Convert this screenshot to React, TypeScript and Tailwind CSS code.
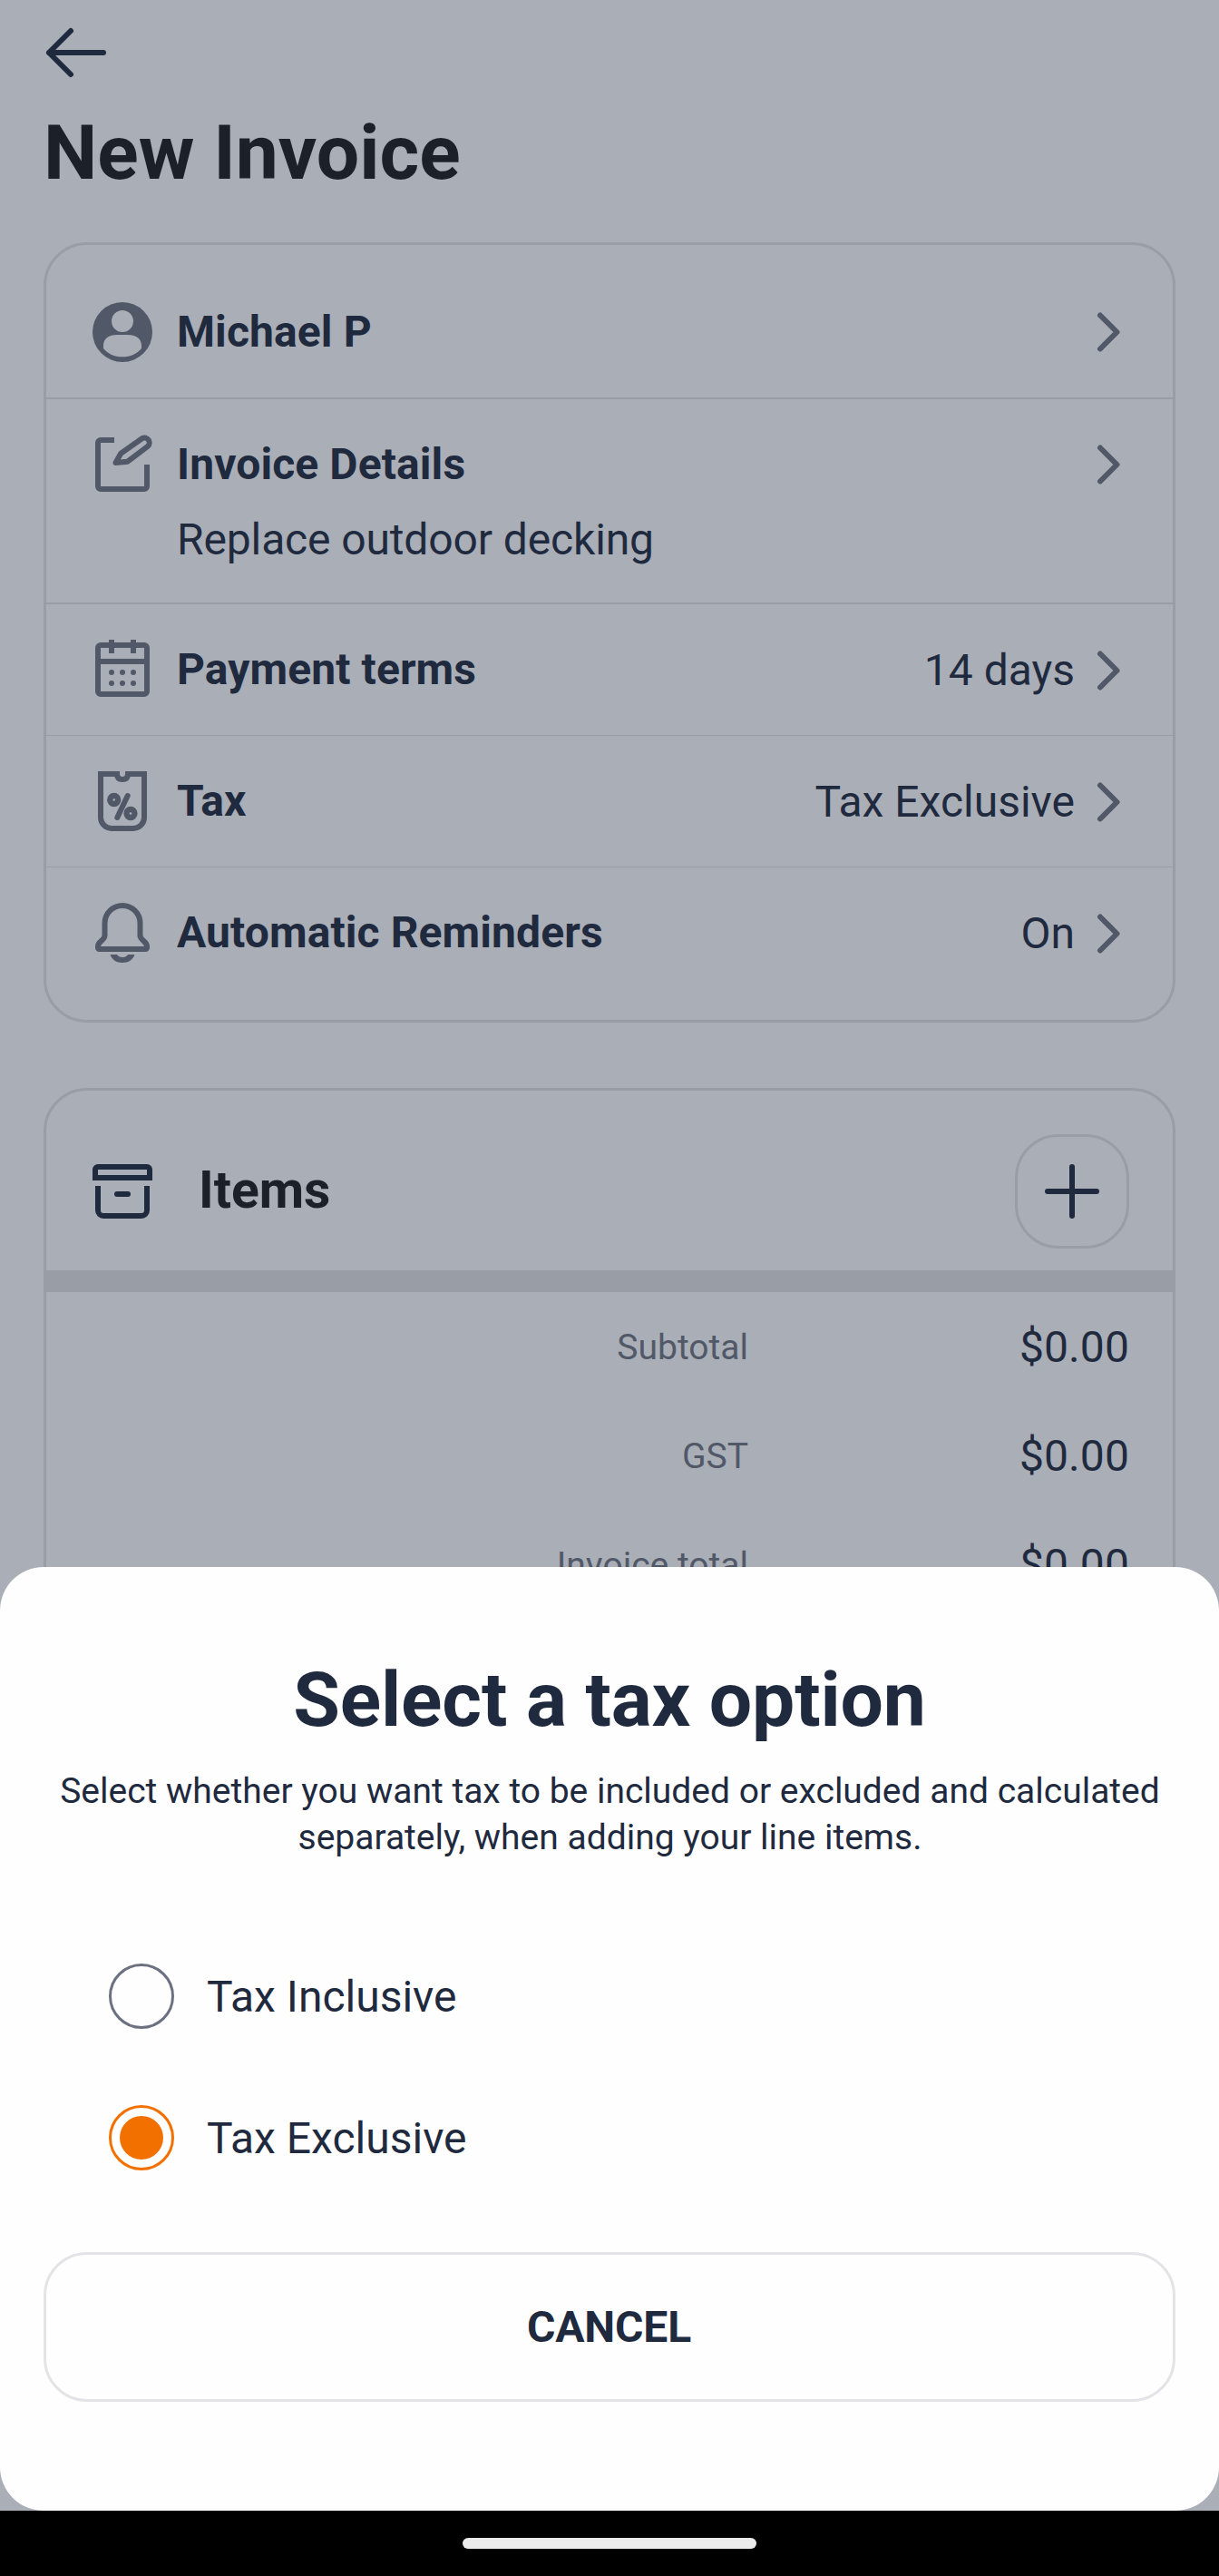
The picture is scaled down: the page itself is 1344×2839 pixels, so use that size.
import type { ReactNode } from "react";

function Icon({ children, className = "" }: { children: ReactNode; className?: string }) {
  return (
    <svg viewBox="0 0 24 24" fill="none" stroke="currentColor" strokeWidth="2" className={`size-[72px] shrink-0 ${className}`}>
      {children}
    </svg>
  );
}

const AvatarIcon = () => (
  <Icon>
    <path
      fill="currentColor"
      stroke="none"
      fillRule="evenodd"
      d="M12 1a11 11 0 1 1 0 22 11 11 0 0 1 0-22ZM12 4a4 4 0 1 0 0 8 4 4 0 0 0 0-8ZM10 13c-3 0-5 1.300-5 4v1c1.600 2 4.100 3.100 7 3.100s5.400-1.100 7-3.100v-1c0-2.700-2-4-5-4Z"
    />
  </Icon>
);

const EditIcon = () => (
  <Icon>
    <path d="M9 3H4a1 1 0 0 0-1 1v16a1 1 0 0 0 1 1h16a1 1 0 0 0 1-1v-8" />
    <path strokeLinejoin="round" d="M9.500 11.300 11.400 7.900 19.200 2.400a1.800 1.800 0 0 1 2.100 2.900L13.900 10.900Z" />
  </Icon>
);

const CalendarIcon = () => (
  <Icon>
    <rect x="3" y="3" width="18" height="18" rx="1" />
    <path d="M3 9h18M8 1v5M16 1v5" />
    <g fill="currentColor" stroke="none">
      {[8, 12, 16].map((x) => [13, 17].map((y) => <circle key={`${x}-${y}`} cx={x} cy={y} r="1" />))}
    </g>
  </Icon>
);

const TaxIcon = () => (
  <Icon>
    <path d="M4 2h6c0 1.300.700 2 2 2s2-.700 2-2h6v16a4 4 0 0 1-4 4H8a4 4 0 0 1-4-4Z" />
    <circle cx="8.900" cy="11.500" r="1.500" strokeWidth="2.100" />
    <circle cx="15" cy="16.500" r="1.500" strokeWidth="2.100" />
    <path strokeLinecap="round" d="M10.100 18l3.800-8" />
  </Icon>
);

const BellIcon = () => (
  <Icon>
    <path d="M3.500 18h17a.5.5 0 0 0 .5-.5V17c0-2-2.500-2.100-2.500-4V8.500a6.500 6.500 0 0 0-13 0V13c0 1.900-2.500 2-2.500 4v.5a.5.5 0 0 0 .5.5Z" />
    <path fill="currentColor" stroke="none" d="M7.500 20H10c.4.700 1 1 2 1s1.600-.3 2-1h2.500c-.6 1.900-2.300 3-4.500 3s-3.900-1.100-4.500-3Z" />
  </Icon>
);

const ArchiveIcon = () => (
  <Icon className="text-[#1f2a3f]">
    <path d="M2 7V4a1 1 0 0 1 1-1h18a1 1 0 0 1 1 1v3Z" />
    <path d="M3 10v9a2 2 0 0 0 2 2h14a2 2 0 0 0 2-2v-9" />
    <path strokeLinecap="round" d="M10 13h4" />
  </Icon>
);

const Chevron = () => (
  <svg viewBox="0 0 30 48" fill="none" stroke="currentColor" strokeWidth="6" strokeLinecap="round" strokeLinejoin="round" className="h-12 w-[30px] shrink-0">
    <path d="M5 5.500 23.500 24 5 42.500" />
  </svg>
);

type RowProps = { icon: ReactNode; label: string; value?: string; detail?: string; divider?: string };

function Row({ icon, label, value, detail, divider = "" }: RowProps) {
  return (
    <div className={`border-[#999da5] ${divider}`}>
      <div className="flex h-36 items-center pr-[55px] pl-12 text-[#515969]">
        {icon}
        <span className="ml-6 grow text-[48px] leading-[56px] font-bold tracking-[0.1px] text-[#1f2a3f]">{label}</span>
        <div className={`flex items-center gap-[23px] ${value ? "pt-0.5" : ""}`}>
          {value && <span className="text-[48px] leading-[56px] text-[#1f2a3f]">{value}</span>}
          <Chevron />
        </div>
      </div>
      {detail && <p className="-mt-[17px] mb-[41px] ml-36 text-[48px] leading-[56px] tracking-[-0.13px] text-[#1f2a3f]">{detail}</p>}
    </div>
  );
}

function Total({ label }: { label: string }) {
  return (
    <div className="flex h-[120px] items-center pt-0.5 text-[#1f2a3f]">
      <span className="w-[774px] text-right text-[39px] text-[#515969]">{label}</span>
      <span className="grow pr-12 text-right text-[48px] tracking-[0.1px]">$0.00</span>
    </div>
  );
}

function Option({ label, checked = false }: { label: string; checked?: boolean }) {
  return (
    <div className="flex items-center gap-9">
      <span className={`flex size-[72px] items-center justify-center rounded-full border-3 ${checked ? "border-[#f27000]" : "border-[#6b7180]"}`}>
        {checked && <span className="size-12 rounded-full bg-[#f27000]" />}
      </span>
      <span className="pt-0.5 text-[48px] leading-[56px]">{label}</span>
    </div>
  );
}

export default function App() {
  return (
    <div className="flex h-[2839px] w-[1344px] flex-col bg-black font-['Roboto',sans-serif]">
      <main className="relative h-[2767px] overflow-hidden bg-[#aaaeb6] px-12">
        <header>
          <div className="flex h-[116px] items-center text-[#1f2a3f]">
            <svg viewBox="0 0 72 60" fill="none" stroke="currentColor" strokeWidth="6" strokeLinecap="round" strokeLinejoin="round" className="h-[60px] w-[72px]">
              <path d="M30 6 6 30l24 24M6 30h60" />
            </svg>
          </div>
          <h1 className="mt-1 h-[147px] text-[84px] leading-[98px] font-bold text-[#1c2129]">New Invoice</h1>
        </header>

        <section className="rounded-[48px] border-3 border-[#999da5] py-6">
          <Row icon={<AvatarIcon />} label="Michael P" />
          <Row icon={<EditIcon />} label="Invoice Details" detail="Replace outdoor decking" divider="border-t-2" />
          <Row icon={<CalendarIcon />} label="Payment terms" value="14 days" divider="border-t-2" />
          <Row icon={<TaxIcon />} label="Tax" value="Tax Exclusive" divider="border-t" />
          <Row icon={<BellIcon />} label="Automatic Reminders" value="On" divider="border-t" />
        </section>

        <section className="mt-[72px] h-[900px] rounded-[48px] border-3 border-[#999da5]">
          <div className="flex items-center border-b-24 border-[#999da5] pt-12 pr-12 pb-6 pl-12">
            <ArchiveIcon />
            <h2 className="ml-12 grow pb-[3px] text-[57px] leading-[66px] font-bold text-[#1c2129]">Items</h2>
            <button className="flex size-[126px] items-center justify-center rounded-[48px] border-3 border-[#999da5] text-[#1f2a3f]">
              <svg viewBox="0 0 60 60" stroke="currentColor" strokeWidth="6" strokeLinecap="round" className="size-[60px]">
                <path d="M30 3v54M3 30h54" />
              </svg>
            </button>
          </div>
          <Total label="Subtotal" />
          <Total label="GST" />
          <Total label="Invoice total" />
        </section>

        <div className="absolute inset-x-0 bottom-0 flex h-[1040px] flex-col rounded-[48px] bg-[#fefefe] px-12 pt-[98px] text-[#1f2a3f]">
          <h2 className="text-center text-[84px] leading-[98px] font-bold tracking-[-0.15px]">Select a tax option</h2>
          <p className="mt-[26px] pl-px text-center text-[39px] leading-[51px] whitespace-nowrap">
            Select whether you want tax to be included or excluded and calculated
            <br />
            separately, when adding your line items.
          </p>
          <div className="mt-[113px] ml-[72px] flex flex-col gap-21">
            <Option label="Tax Inclusive" />
            <Option label="Tax Exclusive" checked />
          </div>
          <button className="mt-[90px] h-[165px] rounded-[48px] border-3 border-[#e3e3e8] pr-px text-[48px] font-bold tracking-[-0.15px]">CANCEL</button>
        </div>
      </main>
      <footer className="flex h-[72px] items-center justify-center">
        <span className="h-3 w-[324px] rounded-full bg-[#ebebeb]" />
      </footer>
    </div>
  );
}
